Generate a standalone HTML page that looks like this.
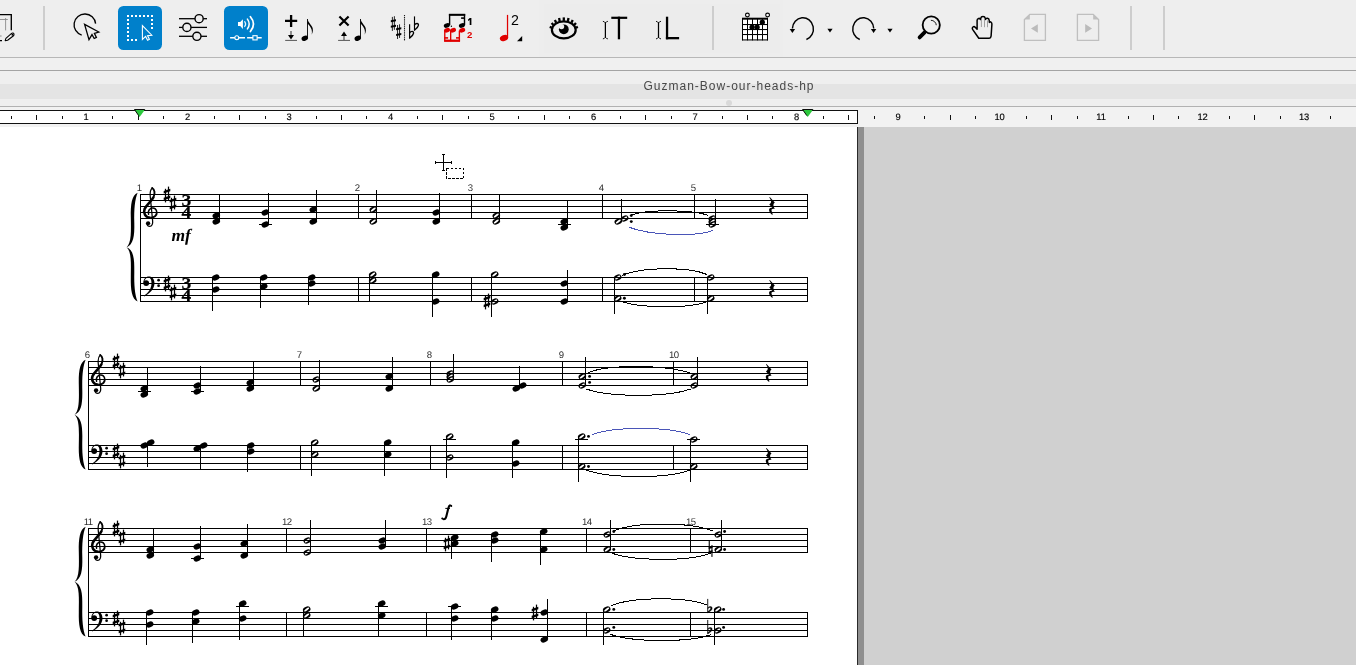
<!DOCTYPE html>
<html lang="en">
<head>
<meta charset="utf-8">
<title>Guzman-Bow-our-heads-hp</title>
<style>
html,body{margin:0;padding:0;overflow:hidden}
body{width:1356px;height:665px;overflow:hidden;position:relative;background:#efefef;font-family:"Liberation Sans",sans-serif;}
.abs{position:absolute;left:0;top:0}
#toolbar{position:absolute;left:0;top:0;width:1356px;height:57px;background:#eeeeee;border-bottom:1px solid #b7b7b7}
#strip1{position:absolute;left:0;top:58px;width:1356px;height:12px;background:#f0f0f0;border-bottom:1px solid #a4a4a4}
#titlebar{position:absolute;left:0;top:71px;width:1356px;height:35px;background:#efefef;border-bottom:1px solid #b2b2b2;overflow:hidden}
#titleband{position:absolute;left:0;top:13px;width:1356px;height:15px;background:#e4e4e4}
#title{position:absolute;left:0;top:7px;width:1458px;text-align:center;font-size:12px;line-height:16px;color:#484848;letter-spacing:1.0px;white-space:nowrap}
#dot{position:absolute;left:726px;top:29px;width:6px;height:6px;border-radius:3px;background:#d9d9d9}
#rulerbar{position:absolute;left:0;top:107px;width:1356px;height:20px;background:#f2f2f2}
#rulerbox{position:absolute;left:-2px;top:3px;width:858px;height:12px;background:#fff;border:1px solid #111}
#desk{position:absolute;left:0;top:127px;width:1356px;height:538px;background:#d0d0d0}
#shadow{position:absolute;left:857px;top:0;width:7px;height:538px;background:#8f8f8f}
#page{position:absolute;left:0;top:0;width:857px;height:538px;background:#fff;border-right:1px solid #2a2a2a}
.rn{font-family:"Liberation Sans",sans-serif;font-size:9.4px;fill:#000;stroke:#000;stroke-width:0.15px;text-rendering:geometricPrecision}
.mn{font-family:"Liberation Sans",sans-serif;font-size:9.6px;fill:#303030;text-rendering:geometricPrecision}
.ts{font-family:"Liberation Serif",serif;font-weight:bold;font-size:17.5px;fill:#000;stroke:#000;stroke-width:0.15px}
.dyn{font-family:"Liberation Serif",serif;font-weight:bold;font-style:italic;fill:#000;text-rendering:geometricPrecision}
svg{position:absolute;left:0;top:0;overflow:hidden;will-change:transform}
#title{will-change:transform}
</style>
</head>
<body>
<div id="toolbar">
<svg width="1356" height="57" viewBox="0 0 1356 57">
<rect x="539" y="0" width="244" height="57" fill="#ededed"/>
<rect x="544" y="4.8" width="236" height="47.5" fill="#ececec"/>
<rect x="43" y="6" width="2" height="44" fill="#cdcdcd"/>
<rect x="712" y="6" width="2" height="44" fill="#cdcdcd"/>
<rect x="1130" y="6" width="2" height="44" fill="#cdcdcd"/>
<rect x="1163" y="6" width="2" height="44" fill="#cdcdcd"/>
<path d="M0 14.55 L11.3 14.55 L11.3 30.3" fill="none" stroke="#000" stroke-width="1.35"/>
<path d="M0 19.5 L7.8 19.5 M5.6 18 L5.6 30.4" fill="none" stroke="#8a8a8a" stroke-width="0.9"/>
<path d="M0 40.6 L2 40.6" stroke="#000" stroke-width="1.2"/>
<path d="M0 36 L1.6 36" stroke="#8a8a8a" stroke-width="1"/>
<path d="M5.2 40.7 L5.9 38.3 L11.3 33.6 C12.3 32.7 13.9 32.9 14.0 34.2 C14.1 35.0 13.6 35.6 13.2 36.0 L7.6 40.3 Z" fill="#f4f4f4" stroke="#000" stroke-width="1.1" stroke-linejoin="round"/>
<circle cx="12.4" cy="34.7" r="0.95" fill="#000"/>
<path d="M81.7 35.1 A10.8 10.8 0 1 1 95.6 23.6" fill="none" stroke="#000" stroke-width="1.35"/>
<path d="M84.6 24.4 L98.8 32.0 L94.4 33.4 L96.4 37.4 L94.2 38.5 L92.0 34.6 L89.0 39.6 Z" fill="#eeeeee" stroke="#000" stroke-width="1.3" stroke-linejoin="miter"/>
<rect x="118" y="6" width="44" height="44" rx="5.5" fill="#0080cb"/>
<rect x="127" y="15" width="2" height="2" fill="#fff"/>
<rect x="127" y="15" width="2" height="2" fill="#fff"/>
<rect x="131" y="15" width="2" height="2" fill="#fff"/>
<rect x="127" y="19" width="2" height="2" fill="#fff"/>
<rect x="135" y="15" width="2" height="2" fill="#fff"/>
<rect x="127" y="23" width="2" height="2" fill="#fff"/>
<rect x="139" y="15" width="2" height="2" fill="#fff"/>
<rect x="127" y="27" width="2" height="2" fill="#fff"/>
<rect x="143" y="15" width="2" height="2" fill="#fff"/>
<rect x="127" y="31" width="2" height="2" fill="#fff"/>
<rect x="147" y="15" width="2" height="2" fill="#fff"/>
<rect x="127" y="35" width="2" height="2" fill="#fff"/>
<rect x="151" y="15" width="2" height="2" fill="#fff"/>
<rect x="127" y="39" width="2" height="2" fill="#fff"/>
<rect x="151" y="15" width="2" height="2" fill="#fff"/>
<rect x="151" y="19" width="2" height="2" fill="#fff"/>
<rect x="151" y="23" width="2" height="2" fill="#fff"/>
<rect x="151" y="27" width="2" height="2" fill="#fff"/>
<rect x="127" y="39" width="2" height="2" fill="#fff"/>
<rect x="131" y="39" width="2" height="2" fill="#fff"/>
<rect x="135" y="39" width="2" height="2" fill="#fff"/>
<path d="M142.4 25.6 L142.4 39.4 L145.6 36.4 L147.6 40.2 L149.4 39.3 L147.5 35.6 L151.8 35.2 Z" fill="#0080cb" stroke="#fff" stroke-width="1.1" stroke-linejoin="miter"/>
<path d="M179 18.7 L207 18.7" stroke="#000" stroke-width="1.3"/>
<circle cx="199.1" cy="18.7" r="4.1" fill="#eeeeee" stroke="#000" stroke-width="1.4"/>
<path d="M179 27.4 L207 27.4" stroke="#000" stroke-width="1.3"/>
<circle cx="186.9" cy="27.4" r="4.1" fill="#eeeeee" stroke="#000" stroke-width="1.4"/>
<path d="M179 36.3 L207 36.3" stroke="#000" stroke-width="1.3"/>
<circle cx="196.9" cy="36.3" r="4.1" fill="#eeeeee" stroke="#000" stroke-width="1.4"/>
<rect x="224" y="6" width="44" height="44" rx="5.5" fill="#0080cb"/>
<path d="M238 22 L240.2 22 L242.9 19.2 L242.9 29 L240.2 25.9 L238 25.9 Z" fill="#fff"/>
<path d="M244.7 21.6 Q246.6 24.0 244.7 26.5" fill="none" stroke="#fff" stroke-width="1.2" opacity="0.92" stroke-linecap="round"/>
<path d="M247.4 19.1 Q251.0 24.0 247.4 28.9" fill="none" stroke="#fff" stroke-width="1.5" stroke-linecap="round"/>
<path d="M250.4 16.7 Q256.6 24.0 250.4 31.5" fill="none" stroke="#fff" stroke-width="1.75" stroke-linecap="round"/>
<path d="M230.1 37.7 L245 37.7 M247.1 37.7 L261.7 37.7" stroke="#fff" stroke-width="1.5"/>
<circle cx="236.8" cy="37.7" r="1.95" fill="#0080cb" stroke="#fff" stroke-width="1.1"/>
<rect x="252.9" y="35.7" width="4.2" height="4.2" fill="#0080cb" stroke="#fff" stroke-width="1.1"/>
<path d="M285 20.9 L297.2 20.9 M291.1 15.1 L291.1 27" stroke="#000" stroke-width="2.3"/>
<path d="M291.0 31 L291.0 35.4" stroke="#6e6e6e" stroke-width="1.5"/>
<path d="M288.0 35.0 L294.0 35.0 L291.0 39.5 Z" fill="#000"/>
<path d="M285.2 40.4 L297 40.4" stroke="#555" stroke-width="1"/>
<ellipse cx="304.8" cy="38.35" rx="3.35" ry="2.45" transform="rotate(-24 304.8 38.35)" fill="#000"/>
<rect x="307.05" y="19" width="0.9" height="19" fill="#000"/>
<path d="M307.5 18.8 C308 23.4 313.2 25.4 312.9 30.4 C312.8 32 312.3 33.4 311.6 34.8 C312.6 31.4 311.7 27.2 307.5 23.4 Z" fill="#000"/>
<path d="M339.4 16.5 L348.6 25.5 M348.6 16.5 L339.4 25.5" stroke="#000" stroke-width="2.2"/>
<path d="M344 35.6 L344 40.0" stroke="#6e6e6e" stroke-width="1.5"/>
<path d="M341.0 36.0 L347.0 36.0 L344 31.5 Z" fill="#000"/>
<path d="M338.1 40.4 L350 40.4" stroke="#555" stroke-width="1"/>
<ellipse cx="357.8" cy="38.35" rx="3.35" ry="2.45" transform="rotate(-24 357.8 38.35)" fill="#000"/>
<rect x="360.05" y="19" width="0.9" height="19" fill="#000"/>
<path d="M360.5 18.8 C361 23.4 366.2 25.4 365.9 30.4 C365.8 32 365.3 33.4 364.6 34.8 C365.6 31.4 364.7 27.2 360.5 23.4 Z" fill="#000"/>
<g fill="#000"><rect x="391.88" y="16.9" width="0.85" height="14.0"/><rect x="393.88" y="16.2" width="0.85" height="13.6"/><path d="M390.8 20.2 l5.2 -1.0 l0 2.0 l-5.2 1.0 Z"/><path d="M390.8 25.8 l5.2 -1.0 l0 2.0 l-5.2 1.0 Z"/></g>
<g fill="#000"><rect x="397.18" y="25" width="0.85" height="14.0"/><rect x="399.18" y="24.3" width="0.85" height="13.6"/><path d="M396.1 28.3 l5.2 -1.0 l0 2.0 l-5.2 1.0 Z"/><path d="M396.1 33.9 l5.2 -1.0 l0 2.0 l-5.2 1.0 Z"/></g>
<path d="M404.5 15 L404.5 41" stroke="#c4c4c4" stroke-width="1"/>
<path d="M404.5 15.1 L404.5 41" stroke="#1a1a1a" stroke-width="1.1" stroke-dasharray="1 0.84"/>
<path d="M409.6 24.3 L409.6 38.3" stroke="#000" stroke-width="1.15" fill="none"/>
<path d="M409.6 32.9 C410.8 30.9 413.9 30.7 413.5 33.3 C413.1 35.5 411 36.9 409.6 38" fill="none" stroke="#000" stroke-width="1.35" stroke-linecap="round"/>
<path d="M414.5 16.4 L414.5 30.4" stroke="#000" stroke-width="1.15" fill="none"/>
<path d="M414.5 25 C415.7 23 418.8 22.8 418.4 25.4 C418 27.6 415.9 29 414.5 30.1" fill="none" stroke="#000" stroke-width="1.35" stroke-linecap="round"/>
<rect x="448.9" y="13.8" width="16.3" height="2.05" fill="#000"/>
<rect x="448.9" y="14" width="1.4" height="11.2" fill="#000"/>
<rect x="463.8" y="14" width="1.4" height="11.2" fill="#000"/>
<rect x="461.1" y="17.3" width="3.5" height="1.6" fill="#000"/>
<ellipse cx="446.8" cy="25.5" rx="3.1" ry="2.15" transform="rotate(-20 446.8 25.5)" fill="#000"/>
<ellipse cx="461.9" cy="25.5" rx="3.1" ry="2.15" transform="rotate(-20 461.9 25.5)" fill="#000"/>
<circle cx="451.4" cy="26.3" r="0.7" fill="#000"/>
<path d="M469.7 18.1 L471.4 18.1 L471.4 24.9 L469.7 24.9 L469.7 20.0 L468.2 20.9 L467.9 19.7 Z" fill="#000"/>
<ellipse cx="447" cy="30.3" rx="3.1" ry="2.2" transform="rotate(-20 447 30.3)" fill="#e00000"/>
<ellipse cx="453" cy="30.3" rx="3.1" ry="2.2" transform="rotate(-20 453 30.3)" fill="#e00000"/>
<ellipse cx="462.2" cy="30.3" rx="3.1" ry="2.2" transform="rotate(-20 462.2 30.3)" fill="#e00000"/>
<rect x="444.1" y="30.6" width="1.35" height="10.6" fill="#e00000"/>
<rect x="450" y="30.6" width="1.35" height="10.6" fill="#e00000"/>
<rect x="458.7" y="30.6" width="1.35" height="10.6" fill="#e00000"/>
<rect x="444.1" y="39.6" width="15.95" height="2.3" fill="#e00000"/>
<rect x="444.1" y="37.1" width="4" height="1.6" fill="#e00000"/>
<rect x="456" y="37.1" width="4" height="1.6" fill="#e00000"/>
<text x="469.7" y="38.2" text-anchor="middle" font-family="Liberation Sans, sans-serif" font-weight="bold" font-size="9.6" fill="#e00000">2</text>
<ellipse cx="504.0" cy="38.0" rx="4.3" ry="2.95" transform="rotate(-22 504 38)" fill="#e00000"/>
<rect x="506.9" y="14.9" width="1.25" height="22.6" fill="#e00000"/>
<text x="515" y="24.85" text-anchor="middle" font-family="Liberation Sans, sans-serif" font-size="14.2" fill="#000">2</text>
<path d="M522.2 36.1 L522.2 41.2 L517 41.2 Z" fill="#000"/>
<ellipse cx="563.8" cy="29.9" rx="11.9" ry="8.5" fill="#ececec" stroke="#000" stroke-width="2.2"/>
<path d="M551.77 27.72 L549.73 26.88" stroke="#000" stroke-width="2.3"/>
<path d="M553.4 25 L551.64 23.09" stroke="#000" stroke-width="2.3"/>
<path d="M556.17 22.81 L554.87 20.05" stroke="#000" stroke-width="2.3"/>
<path d="M559.76 21.39 L559.08 18.08" stroke="#000" stroke-width="2.3"/>
<path d="M563.8 20.9 L563.8 17.4" stroke="#000" stroke-width="2.3"/>
<path d="M567.84 21.39 L568.52 18.08" stroke="#000" stroke-width="2.3"/>
<path d="M571.43 22.81 L572.73 20.05" stroke="#000" stroke-width="2.3"/>
<path d="M574.2 25 L575.96 23.09" stroke="#000" stroke-width="2.3"/>
<path d="M575.83 27.72 L577.87 26.88" stroke="#000" stroke-width="2.3"/>
<circle cx="563.8" cy="29.3" r="4.9" fill="#000"/>
<circle cx="561.5" cy="26.6" r="2.7" fill="#ececec"/>
<path d="M605.4 22.4 L605.4 37.8" stroke="#000" stroke-width="1.25"/>
<path d="M602.9 21.3 Q604.5 21.5 605.4 22.9 Q606.3 21.5 607.9 21.3 M602.9 38.9 Q604.5 38.7 605.4 37.3 Q606.3 38.7 607.9 38.9" fill="none" stroke="#000" stroke-width="0.9"/>
<rect x="611.3" y="16.7" width="15.9" height="2.2" fill="#000"/>
<rect x="617.8" y="16.7" width="2.3" height="22.6" fill="#000"/>
<path d="M658.5 22.4 L658.5 37.8" stroke="#000" stroke-width="1.25"/>
<path d="M656 21.3 Q657.6 21.5 658.5 22.9 Q659.4 21.5 661 21.3 M656 38.9 Q657.6 38.7 658.5 37.3 Q659.4 38.7 661 38.9" fill="none" stroke="#000" stroke-width="0.9"/>
<rect x="665.9" y="16.7" width="2.3" height="22.6" fill="#000"/>
<rect x="665.9" y="37" width="13.2" height="2.3" fill="#000"/>
<rect x="742" y="18" width="26" height="22.4" fill="#fff"/>
<rect x="742" y="17.7" width="26" height="2" fill="#000"/>
<rect x="742" y="18" width="1" height="22.4" fill="#000"/>
<rect x="747" y="18" width="1" height="22.4" fill="#000"/>
<rect x="752" y="18" width="1" height="22.4" fill="#000"/>
<rect x="757" y="18" width="1" height="22.4" fill="#000"/>
<rect x="762" y="18" width="1" height="22.4" fill="#000"/>
<rect x="767" y="18" width="1" height="22.4" fill="#000"/>
<rect x="742" y="24" width="26" height="1.05" fill="#000"/>
<rect x="742" y="29" width="26" height="1.05" fill="#000"/>
<rect x="742" y="34" width="26" height="1.05" fill="#000"/>
<rect x="742" y="39.4" width="26" height="1.05" fill="#000"/>
<circle cx="747.4" cy="15.0" r="1.9" fill="#f6f6f6" stroke="#000" stroke-width="1.1"/>
<circle cx="767.6" cy="15.0" r="1.9" fill="#f6f6f6" stroke="#000" stroke-width="1.1"/>
<ellipse cx="762.3" cy="22.2" rx="2.6" ry="2.7" fill="#000"/>
<ellipse cx="752.1" cy="27.2" rx="2.6" ry="2.7" fill="#000"/>
<ellipse cx="757.1" cy="27.2" rx="2.6" ry="2.7" fill="#000"/>
<path d="M792.4 28.6 A10.5 11.2 0 1 1 806.4 39.5" fill="none" stroke="#000" stroke-width="1.45"/>
<path d="M789.7 28.9 L795.1 28.9 L792.4 33.0 Z" fill="#000"/>
<path d="M827.4 28.7 L832.6 28.7 L830 32.6 Z" fill="#000"/>
<path d="M859.75 39.5 A10.5 11.2 0 1 1 873.75 28.6" fill="none" stroke="#000" stroke-width="1.45"/>
<path d="M870.9 28.9 L876.3 28.9 L873.6 33.0 Z" fill="#000"/>
<path d="M887.4 28.7 L892.6 28.7 L890 32.6 Z" fill="#000"/>
<circle cx="931.25" cy="25.0" r="8.6" fill="none" stroke="#000" stroke-width="1.85"/>
<path d="M930.9 20.3 A5.4 5.4 0 0 1 936.3 25.2" fill="none" stroke="#000" stroke-width="0.9"/>
<path d="M924.6 32.3 L919.6 37.4" stroke="#000" stroke-width="3.8" stroke-linecap="round"/>
<path d="M978.8 38.3 L989.0 38.3 C990.4 38.3 990.9 37.2 991.1 36 L991.9 24.2 C992.0 22.2 990.2 21.2 989.4 22.4 L989.2 20.2 C989 17.8 986 17.6 985.4 19.4 L985.2 18.2 C984.8 15.8 981.2 15.8 980.8 18.2 L980.6 19.6 C979.8 17.6 977.2 18.2 977.1 20.4 L977.1 29.2 L975.2 27.2 C973.8 25.8 971.4 27.4 972.6 29.4 Z" fill="#eeeeee" stroke="#000" stroke-width="1.5" stroke-linejoin="round"/>
<path d="M981.4 19.4 L981.4 27 M984.5 18.6 L984.5 27.2 M987.5 20.4 L987.5 27.2" stroke="#8c8c8c" stroke-width="0.8"/>
<path d="M1029.8 14.4 L1045.4 14.4 L1045.4 40.4 L1024.4 40.4 L1024.4 19.6 Z" fill="none" stroke="#bfbfbf" stroke-width="1.3"/>
<path d="M1024.4 19.6 L1029.8 14.4 L1029.8 19.6 Z" fill="#bfbfbf"/>
<path d="M1031 28.4 L1037.8 24.2 L1037.8 32.8 Z" fill="#bbbbbb"/>
<path d="M1077.4 14.4 L1093.2 14.4 L1098.6 19.6 L1098.6 40.4 L1077.4 40.4 Z" fill="none" stroke="#bfbfbf" stroke-width="1.3"/>
<path d="M1093.2 14.4 L1098.6 19.6 L1093.2 19.6 Z" fill="#bfbfbf"/>
<path d="M1092 28.4 L1085.2 24.0 L1085.2 32.8 Z" fill="#bbbbbb"/>
</svg>
</div>
<div id="strip1"></div>
<div id="titlebar"><div id="titleband"></div><div id="title">Guzman-Bow-our-heads-hp</div><div id="dot"></div></div>
<div id="rulerbar"><div id="rulerbox"></div></div>
<div id="desk"><div id="shadow"></div><div id="page"></div></div>
<svg id="ruler" width="1356" height="665" viewBox="0 0 1356 665">
<text x="-15.38" y="119.75" text-anchor="middle" class="rn">0</text>
<rect x="11" y="116" width="1" height="3" fill="#111"/>
<rect x="36" y="115" width="1" height="5" fill="#111"/>
<rect x="62" y="116" width="1" height="3" fill="#111"/>
<text x="86.12" y="119.75" text-anchor="middle" class="rn">1</text>
<rect x="112" y="116" width="1" height="3" fill="#111"/>
<rect x="138" y="115" width="1" height="5" fill="#111"/>
<rect x="163" y="116" width="1" height="3" fill="#111"/>
<text x="187.62" y="119.75" text-anchor="middle" class="rn">2</text>
<rect x="214" y="116" width="1" height="3" fill="#111"/>
<rect x="239" y="115" width="1" height="5" fill="#111"/>
<rect x="265" y="116" width="1" height="3" fill="#111"/>
<text x="289.12" y="119.75" text-anchor="middle" class="rn">3</text>
<rect x="316" y="116" width="1" height="3" fill="#111"/>
<rect x="341" y="115" width="1" height="5" fill="#111"/>
<rect x="366" y="116" width="1" height="3" fill="#111"/>
<text x="390.62" y="119.75" text-anchor="middle" class="rn">4</text>
<rect x="417" y="116" width="1" height="3" fill="#111"/>
<rect x="442" y="115" width="1" height="5" fill="#111"/>
<rect x="468" y="116" width="1" height="3" fill="#111"/>
<text x="492.12" y="119.75" text-anchor="middle" class="rn">5</text>
<rect x="518" y="116" width="1" height="3" fill="#111"/>
<rect x="544" y="115" width="1" height="5" fill="#111"/>
<rect x="569" y="116" width="1" height="3" fill="#111"/>
<text x="593.62" y="119.75" text-anchor="middle" class="rn">6</text>
<rect x="620" y="116" width="1" height="3" fill="#111"/>
<rect x="645" y="115" width="1" height="5" fill="#111"/>
<rect x="671" y="116" width="1" height="3" fill="#111"/>
<text x="695.12" y="119.75" text-anchor="middle" class="rn">7</text>
<rect x="722" y="116" width="1" height="3" fill="#111"/>
<rect x="747" y="115" width="1" height="5" fill="#111"/>
<rect x="772" y="116" width="1" height="3" fill="#111"/>
<text x="796.62" y="119.75" text-anchor="middle" class="rn">8</text>
<rect x="823" y="116" width="1" height="3" fill="#111"/>
<rect x="848" y="115" width="1" height="5" fill="#111"/>
<rect x="874" y="116" width="1" height="3" fill="#111"/>
<text x="898.12" y="119.75" text-anchor="middle" class="rn">9</text>
<rect x="924" y="116" width="1" height="3" fill="#111"/>
<rect x="950" y="115" width="1" height="5" fill="#111"/>
<rect x="975" y="116" width="1" height="3" fill="#111"/>
<text x="999.62" y="119.75" text-anchor="middle" class="rn">10</text>
<rect x="1026" y="116" width="1" height="3" fill="#111"/>
<rect x="1051" y="115" width="1" height="5" fill="#111"/>
<rect x="1077" y="116" width="1" height="3" fill="#111"/>
<text x="1101.12" y="119.75" text-anchor="middle" class="rn">11</text>
<rect x="1128" y="116" width="1" height="3" fill="#111"/>
<rect x="1153" y="115" width="1" height="5" fill="#111"/>
<rect x="1178" y="116" width="1" height="3" fill="#111"/>
<text x="1202.62" y="119.75" text-anchor="middle" class="rn">12</text>
<rect x="1229" y="116" width="1" height="3" fill="#111"/>
<rect x="1254" y="115" width="1" height="5" fill="#111"/>
<rect x="1280" y="116" width="1" height="3" fill="#111"/>
<text x="1304.12" y="119.75" text-anchor="middle" class="rn">13</text>
<rect x="1330" y="116" width="1" height="3" fill="#111"/>
<rect x="1356" y="115" width="1" height="5" fill="#111"/>
<path d="M134.2 109.4 L145.1 109.4 L139.6 117.1 Z" fill="#2bc83c"/>
<path d="M144.9 111.0 L144.7 109.5 L134.5 109.5 L138.7 115.6" stroke="#0a0a0a" stroke-width="1" fill="none" stroke-linejoin="round"/>
<path d="M802.3 109.4 L813.2 109.4 L807.7 117.1 Z" fill="#2bc83c"/>
<path d="M813 111.0 L812.8 109.5 L802.6 109.5 L806.8 115.6" stroke="#0a0a0a" stroke-width="1" fill="none" stroke-linejoin="round"/>
</svg>
<svg id="score" width="1356" height="665" viewBox="0 0 1356 665">
<rect x="140" y="194" width="1" height="108" fill="#000" shape-rendering="crispEdges"/>
<rect x="807" y="194" width="1" height="25" fill="#000" shape-rendering="crispEdges"/>
<rect x="807" y="277" width="1" height="25" fill="#000" shape-rendering="crispEdges"/>
<path d="M137.6 192.8 C131.8 194.98 130.5 204.77 130.8 217.28 C131 230.88 131.6 242.85 126.6 247.2 C133.4 244.48 134.6 236.32 134.3 222.72 C134 209.12 134.8 199.87 137.6 192.8 Z M137.6 301.6 C131.8 299.42 130.5 289.63 130.8 277.12 C131 263.52 131.6 251.55 126.6 247.2 C133.4 249.92 134.6 258.08 134.3 271.68 C134 285.28 134.8 294.53 137.6 301.6 Z" fill="#000"/>
<path d="M152.3 187.9C150.6 189.6 149.9 192.8 150.2 196L152.6 220.5C153.1 224.1 151.7 226.4 149.8 226.4C148.4 226.4 147.2 225.4 147 224" fill="none" stroke="#000" stroke-width="1.25" stroke-linecap="round" stroke-linejoin="round"/>
<path d="M152.2 188C154.6 189.3 155.3 193.5 153.6 197" fill="none" stroke="#000" stroke-width="1.9" stroke-linecap="round" stroke-linejoin="round"/>
<path d="M153.6 197C151.8 201 146.5 204.5 144.6 209C143 213 145.5 217.6 150.3 217.7" fill="none" stroke="#000" stroke-width="2.6" stroke-linecap="butt" stroke-linejoin="round"/>
<path d="M150.1 217.7C154.2 217.8 157 215.4 156.8 212.2" fill="none" stroke="#000" stroke-width="1.9" stroke-linecap="butt" stroke-linejoin="round"/>
<path d="M156.8 212.4C156.6 209.2 154.4 207.8 152.4 208C149.6 208.3 147.6 211 148.6 214.2" fill="none" stroke="#000" stroke-width="1.5" stroke-linecap="round" stroke-linejoin="round"/>
<circle cx="148.1" cy="223.3" r="2.15" fill="#000"/>
<path d="M143.6 283.1C143 279.1 146 276.6 148.8 276.6C152.2 276.6 154.5 279.3 154.5 283.3C154.5 289.1 149.6 293.5 144.2 296.4L143.9 295.8C148.6 292.9 151.5 288.5 151.5 283.1C151.5 279.7 150.4 277.5 148.4 277.5C146.2 277.5 144.6 279.3 144.4 281.9Z" fill="#000"/>
<circle cx="146.2" cy="283.1" r="2.9" fill="#000"/>
<circle cx="158.6" cy="280.2" r="1.35" fill="#000"/>
<circle cx="158.6" cy="285.7" r="1.35" fill="#000"/>
<g fill="#000"><rect x="164.88" y="188.8" width="1.25" height="13.6"/><rect x="167.88" y="186.6" width="1.25" height="13.8"/><path transform="translate(167 194.5)" d="M-3.3 -3.4 L3.3 -5.7 L3.3 -3.2 L-3.3 -0.9 Z M-3.3 3.2 L3.3 0.9 L3.3 3.4 L-3.3 5.7 Z"/></g>
<g fill="#000"><rect x="170.88" y="197.8" width="1.25" height="13.6"/><rect x="173.88" y="195.6" width="1.25" height="13.8"/><path transform="translate(173 203.5)" d="M-3.3 -3.4 L3.3 -5.7 L3.3 -3.2 L-3.3 -0.9 Z M-3.3 3.2 L3.3 0.9 L3.3 3.4 L-3.3 5.7 Z"/></g>
<g fill="#000"><rect x="164.88" y="277.8" width="1.25" height="13.6"/><rect x="167.88" y="275.6" width="1.25" height="13.8"/><path transform="translate(167 283.5)" d="M-3.3 -3.4 L3.3 -5.7 L3.3 -3.2 L-3.3 -0.9 Z M-3.3 3.2 L3.3 0.9 L3.3 3.4 L-3.3 5.7 Z"/></g>
<g fill="#000"><rect x="170.88" y="286.8" width="1.25" height="13.6"/><rect x="173.88" y="284.6" width="1.25" height="13.8"/><path transform="translate(173 292.5)" d="M-3.3 -3.4 L3.3 -5.7 L3.3 -3.2 L-3.3 -0.9 Z M-3.3 3.2 L3.3 0.9 L3.3 3.4 L-3.3 5.7 Z"/></g>
<text transform="translate(186.3 206.4) scale(1.12 1)" text-anchor="middle" class="ts">3</text>
<text transform="translate(186.3 218.4) scale(1.12 1)" text-anchor="middle" class="ts">4</text>
<text transform="translate(186.3 289.4) scale(1.12 1)" text-anchor="middle" class="ts">3</text>
<text transform="translate(186.3 301.4) scale(1.12 1)" text-anchor="middle" class="ts">4</text>
<text x="139.5" y="191.1" text-anchor="middle" class="mn">1</text>
<rect x="358" y="194" width="1" height="25" fill="#000" shape-rendering="crispEdges"/>
<rect x="358" y="277" width="1" height="25" fill="#000" shape-rendering="crispEdges"/>
<text x="357.5" y="191.1" text-anchor="middle" class="mn">2</text>
<rect x="471" y="194" width="1" height="25" fill="#000" shape-rendering="crispEdges"/>
<rect x="471" y="277" width="1" height="25" fill="#000" shape-rendering="crispEdges"/>
<text x="470.5" y="191.1" text-anchor="middle" class="mn">3</text>
<rect x="602" y="194" width="1" height="25" fill="#000" shape-rendering="crispEdges"/>
<rect x="602" y="277" width="1" height="25" fill="#000" shape-rendering="crispEdges"/>
<text x="601.5" y="191.1" text-anchor="middle" class="mn">4</text>
<rect x="694" y="194" width="1" height="25" fill="#000" shape-rendering="crispEdges"/>
<rect x="694" y="277" width="1" height="25" fill="#000" shape-rendering="crispEdges"/>
<text x="693.5" y="191.1" text-anchor="middle" class="mn">5</text>
<text x="171.5" y="240.7" class="dyn" font-size="17.5">mf</text>
<rect x="219" y="194" width="1" height="27" fill="#000" shape-rendering="crispEdges"/>
<ellipse cx="216.3" cy="215.5" rx="3.95" ry="2.85" transform="rotate(-24 216.3 215.5)" fill="#000"/>
<ellipse cx="216.3" cy="221.5" rx="3.95" ry="2.85" transform="rotate(-24 216.3 221.5)" fill="#000"/>
<rect x="268" y="193" width="1" height="31" fill="#000" shape-rendering="crispEdges"/>
<ellipse cx="265.3" cy="212.5" rx="3.95" ry="2.85" transform="rotate(-24 265.3 212.5)" fill="#000"/>
<ellipse cx="265.3" cy="224.5" rx="3.95" ry="2.85" transform="rotate(-24 265.3 224.5)" fill="#000"/>
<rect x="316" y="190" width="1" height="31" fill="#000" shape-rendering="crispEdges"/>
<ellipse cx="313.3" cy="209.5" rx="3.95" ry="2.85" transform="rotate(-24 313.3 209.5)" fill="#000"/>
<ellipse cx="313.3" cy="221.5" rx="3.95" ry="2.85" transform="rotate(-24 313.3 221.5)" fill="#000"/>
<rect x="376" y="190" width="1" height="31" fill="#000" shape-rendering="crispEdges"/>
<ellipse cx="373.3" cy="209.5" rx="3.95" ry="2.85" transform="rotate(-24 373.3 209.5)" fill="#000"/>
<ellipse cx="373.3" cy="209.5" rx="3.0" ry="1.05" transform="rotate(-36 373.3 209.5)" fill="#fff"/>
<ellipse cx="373.3" cy="221.5" rx="3.95" ry="2.85" transform="rotate(-24 373.3 221.5)" fill="#000"/>
<ellipse cx="373.3" cy="221.5" rx="3.0" ry="1.05" transform="rotate(-36 373.3 221.5)" fill="#fff"/>
<rect x="439" y="193" width="1" height="28" fill="#000" shape-rendering="crispEdges"/>
<ellipse cx="436.3" cy="212.5" rx="3.95" ry="2.85" transform="rotate(-24 436.3 212.5)" fill="#000"/>
<ellipse cx="436.3" cy="221.5" rx="3.95" ry="2.85" transform="rotate(-24 436.3 221.5)" fill="#000"/>
<rect x="499" y="194" width="1" height="27" fill="#000" shape-rendering="crispEdges"/>
<ellipse cx="496.3" cy="215.5" rx="3.95" ry="2.85" transform="rotate(-24 496.3 215.5)" fill="#000"/>
<ellipse cx="496.3" cy="215.5" rx="3.0" ry="1.05" transform="rotate(-36 496.3 215.5)" fill="#fff"/>
<ellipse cx="496.3" cy="221.5" rx="3.95" ry="2.85" transform="rotate(-24 496.3 221.5)" fill="#000"/>
<ellipse cx="496.3" cy="221.5" rx="3.0" ry="1.05" transform="rotate(-36 496.3 221.5)" fill="#fff"/>
<rect x="567" y="200" width="1" height="27" fill="#000" shape-rendering="crispEdges"/>
<ellipse cx="564.3" cy="221.5" rx="3.95" ry="2.85" transform="rotate(-24 564.3 221.5)" fill="#000"/>
<ellipse cx="564.3" cy="227.5" rx="3.95" ry="2.85" transform="rotate(-24 564.3 227.5)" fill="#000"/>
<rect x="621" y="199" width="1" height="22" fill="#000" shape-rendering="crispEdges"/>
<ellipse cx="618.3" cy="221.5" rx="3.95" ry="2.85" transform="rotate(-24 618.3 221.5)" fill="#000"/>
<ellipse cx="618.3" cy="221.5" rx="3.0" ry="1.05" transform="rotate(-36 618.3 221.5)" fill="#fff"/>
<ellipse cx="624.7" cy="218.5" rx="3.95" ry="2.85" transform="rotate(-24 624.7 218.5)" fill="#000"/>
<ellipse cx="624.7" cy="218.5" rx="3.0" ry="1.05" transform="rotate(-36 624.7 218.5)" fill="#fff"/>
<circle cx="631.3" cy="215.6" r="1.45" fill="#000"/>
<circle cx="631.3" cy="221.6" r="1.45" fill="#000"/>
<rect x="715" y="199" width="1" height="25" fill="#000" shape-rendering="crispEdges"/>
<ellipse cx="712.3" cy="218.5" rx="3.95" ry="2.85" transform="rotate(-24 712.3 218.5)" fill="#000"/>
<ellipse cx="712.3" cy="218.5" rx="3.0" ry="1.05" transform="rotate(-36 712.3 218.5)" fill="#fff"/>
<ellipse cx="712.3" cy="221.5" rx="3.95" ry="2.85" transform="rotate(-24 712.3 221.5)" fill="#000"/>
<ellipse cx="712.3" cy="221.5" rx="3.0" ry="1.05" transform="rotate(-36 712.3 221.5)" fill="#fff"/>
<ellipse cx="712.3" cy="224.5" rx="3.95" ry="2.85" transform="rotate(-24 712.3 224.5)" fill="#000"/>
<ellipse cx="712.3" cy="224.5" rx="3.0" ry="1.05" transform="rotate(-36 712.3 224.5)" fill="#fff"/>
<path transform="translate(771.9 194)" fill="#000" d="M-2.1 3.0 L2.9 8.5 C1.3 9.9 0.9 11.3 3.0 14.9 C0.6 14.5 -1.0 15.3 -0.2 17.2 L0.9 20.4 L0.2 20.8 C-3.5 17.8 -4.2 13.0 0.4 13.7 L-2.6 10.4 C-0.5 9.0 0.1 7.2 -2.6 3.5 Z"/>
<path d="M631.6 214.9 C648.5 209.17 691.5 209.57 708.4 215.3" fill="none" stroke="#000" stroke-width="1" shape-rendering="crispEdges"/>
<path d="M629 227.2 C647.52 234.67 694.68 237.77 713.2 230.3" fill="none" stroke="#4a55b8" stroke-width="1" shape-rendering="crispEdges"/>
<rect x="212" y="278" width="1" height="33" fill="#000" shape-rendering="crispEdges"/>
<ellipse cx="215.7" cy="277.5" rx="3.95" ry="2.85" transform="rotate(-24 215.7 277.5)" fill="#000"/>
<ellipse cx="215.7" cy="289.5" rx="3.95" ry="2.85" transform="rotate(-24 215.7 289.5)" fill="#000"/>
<rect x="260" y="278" width="1" height="30" fill="#000" shape-rendering="crispEdges"/>
<ellipse cx="263.7" cy="277.5" rx="3.95" ry="2.85" transform="rotate(-24 263.7 277.5)" fill="#000"/>
<ellipse cx="263.7" cy="286.5" rx="3.95" ry="2.85" transform="rotate(-24 263.7 286.5)" fill="#000"/>
<rect x="308" y="278" width="1" height="27" fill="#000" shape-rendering="crispEdges"/>
<ellipse cx="311.7" cy="277.5" rx="3.95" ry="2.85" transform="rotate(-24 311.7 277.5)" fill="#000"/>
<ellipse cx="311.7" cy="283.5" rx="3.95" ry="2.85" transform="rotate(-24 311.7 283.5)" fill="#000"/>
<rect x="369" y="275" width="1" height="27" fill="#000" shape-rendering="crispEdges"/>
<ellipse cx="372.7" cy="274.5" rx="3.95" ry="2.85" transform="rotate(-24 372.7 274.5)" fill="#000"/>
<ellipse cx="372.7" cy="274.5" rx="3.0" ry="1.05" transform="rotate(-36 372.7 274.5)" fill="#fff"/>
<ellipse cx="372.7" cy="280.5" rx="3.95" ry="2.85" transform="rotate(-24 372.7 280.5)" fill="#000"/>
<ellipse cx="372.7" cy="280.5" rx="3.0" ry="1.05" transform="rotate(-36 372.7 280.5)" fill="#fff"/>
<rect x="432" y="275" width="1" height="42" fill="#000" shape-rendering="crispEdges"/>
<ellipse cx="435.7" cy="274.5" rx="3.95" ry="2.85" transform="rotate(-24 435.7 274.5)" fill="#000"/>
<ellipse cx="435.7" cy="301.5" rx="3.95" ry="2.85" transform="rotate(-24 435.7 301.5)" fill="#000"/>
<rect x="491" y="275" width="1" height="42" fill="#000" shape-rendering="crispEdges"/>
<ellipse cx="494.7" cy="274.5" rx="3.95" ry="2.85" transform="rotate(-24 494.7 274.5)" fill="#000"/>
<ellipse cx="494.7" cy="274.5" rx="3.0" ry="1.05" transform="rotate(-36 494.7 274.5)" fill="#fff"/>
<ellipse cx="494.7" cy="301.5" rx="3.95" ry="2.85" transform="rotate(-24 494.7 301.5)" fill="#000"/>
<ellipse cx="494.7" cy="301.5" rx="3.0" ry="1.05" transform="rotate(-36 494.7 301.5)" fill="#fff"/>
<g fill="#000"><rect x="484.88" y="295.8" width="1.25" height="13.6"/><rect x="487.88" y="293.6" width="1.25" height="13.8"/><path transform="translate(487 301.5)" d="M-3.3 -3.4 L3.3 -5.7 L3.3 -3.2 L-3.3 -0.9 Z M-3.3 3.2 L3.3 0.9 L3.3 3.4 L-3.3 5.7 Z"/></g>
<rect x="567" y="270" width="1" height="31" fill="#000" shape-rendering="crispEdges"/>
<ellipse cx="564.3" cy="283.5" rx="3.95" ry="2.85" transform="rotate(-24 564.3 283.5)" fill="#000"/>
<ellipse cx="564.3" cy="301.5" rx="3.95" ry="2.85" transform="rotate(-24 564.3 301.5)" fill="#000"/>
<rect x="614" y="278" width="1" height="36" fill="#000" shape-rendering="crispEdges"/>
<ellipse cx="617.7" cy="277.5" rx="3.95" ry="2.85" transform="rotate(-24 617.7 277.5)" fill="#000"/>
<ellipse cx="617.7" cy="277.5" rx="3.0" ry="1.05" transform="rotate(-36 617.7 277.5)" fill="#fff"/>
<ellipse cx="617.7" cy="298.5" rx="3.95" ry="2.85" transform="rotate(-24 617.7 298.5)" fill="#000"/>
<ellipse cx="617.7" cy="298.5" rx="3.0" ry="1.05" transform="rotate(-36 617.7 298.5)" fill="#fff"/>
<circle cx="624.4" cy="274.5" r="1.45" fill="#000"/>
<circle cx="624.4" cy="298.3" r="1.45" fill="#000"/>
<rect x="707" y="278" width="1" height="36" fill="#000" shape-rendering="crispEdges"/>
<ellipse cx="710.7" cy="277.5" rx="3.95" ry="2.85" transform="rotate(-24 710.7 277.5)" fill="#000"/>
<ellipse cx="710.7" cy="277.5" rx="3.0" ry="1.05" transform="rotate(-36 710.7 277.5)" fill="#fff"/>
<ellipse cx="710.7" cy="298.5" rx="3.95" ry="2.85" transform="rotate(-24 710.7 298.5)" fill="#000"/>
<ellipse cx="710.7" cy="298.5" rx="3.0" ry="1.05" transform="rotate(-36 710.7 298.5)" fill="#fff"/>
<path transform="translate(771.9 277)" fill="#000" d="M-2.1 3.0 L2.9 8.5 C1.3 9.9 0.9 11.3 3.0 14.9 C0.6 14.5 -1.0 15.3 -0.2 17.2 L0.9 20.4 L0.2 20.8 C-3.5 17.8 -4.2 13.0 0.4 13.7 L-2.6 10.4 C-0.5 9.0 0.1 7.2 -2.6 3.5 Z"/>
<path d="M621.6 275.5 C640.34 267.23 688.06 266.23 706.8 274.5" fill="none" stroke="#000" stroke-width="1" shape-rendering="crispEdges"/>
<path d="M621.6 301.4 C640.34 308.2 688.06 308.6 706.8 301.8" fill="none" stroke="#000" stroke-width="1" shape-rendering="crispEdges"/>
<rect x="88" y="361" width="1" height="109" fill="#000" shape-rendering="crispEdges"/>
<rect x="807" y="361" width="1" height="25" fill="#000" shape-rendering="crispEdges"/>
<rect x="807" y="445" width="1" height="25" fill="#000" shape-rendering="crispEdges"/>
<path d="M85.6 359.8 C79.8 362 78.5 371.88 78.8 384.5 C79 398.23 79.6 410.31 74.6 414.7 C81.4 411.96 82.6 403.72 82.3 390 C82 376.27 82.8 366.94 85.6 359.8 Z M85.6 469.6 C79.8 467.4 78.5 457.52 78.8 444.9 C79 431.17 79.6 419.09 74.6 414.7 C81.4 417.45 82.6 425.68 82.3 439.41 C82 453.13 82.8 462.46 85.6 469.6 Z" fill="#000"/>
<path d="M100.3 354.9C98.6 356.6 97.9 359.8 98.2 363L100.6 387.5C101.1 391.1 99.7 393.4 97.8 393.4C96.4 393.4 95.2 392.4 95 391" fill="none" stroke="#000" stroke-width="1.25" stroke-linecap="round" stroke-linejoin="round"/>
<path d="M100.2 355C102.6 356.3 103.3 360.5 101.6 364" fill="none" stroke="#000" stroke-width="1.9" stroke-linecap="round" stroke-linejoin="round"/>
<path d="M101.6 364C99.8 368 94.5 371.5 92.6 376C91 380 93.5 384.6 98.3 384.7" fill="none" stroke="#000" stroke-width="2.6" stroke-linecap="butt" stroke-linejoin="round"/>
<path d="M98.1 384.7C102.2 384.8 105 382.4 104.8 379.2" fill="none" stroke="#000" stroke-width="1.9" stroke-linecap="butt" stroke-linejoin="round"/>
<path d="M104.8 379.4C104.6 376.2 102.4 374.8 100.4 375C97.6 375.3 95.6 378 96.6 381.2" fill="none" stroke="#000" stroke-width="1.5" stroke-linecap="round" stroke-linejoin="round"/>
<circle cx="96.1" cy="390.3" r="2.15" fill="#000"/>
<path d="M91.6 451.1C91 447.1 94 444.6 96.8 444.6C100.2 444.6 102.5 447.3 102.5 451.3C102.5 457.1 97.6 461.5 92.2 464.4L91.9 463.8C96.6 460.9 99.5 456.5 99.5 451.1C99.5 447.7 98.4 445.5 96.4 445.5C94.2 445.5 92.6 447.3 92.4 449.9Z" fill="#000"/>
<circle cx="94.2" cy="451.1" r="2.9" fill="#000"/>
<circle cx="106.6" cy="448.2" r="1.35" fill="#000"/>
<circle cx="106.6" cy="453.7" r="1.35" fill="#000"/>
<g fill="#000"><rect x="113.88" y="355.8" width="1.25" height="13.6"/><rect x="116.88" y="353.6" width="1.25" height="13.8"/><path transform="translate(116 361.5)" d="M-3.3 -3.4 L3.3 -5.7 L3.3 -3.2 L-3.3 -0.9 Z M-3.3 3.2 L3.3 0.9 L3.3 3.4 L-3.3 5.7 Z"/></g>
<g fill="#000"><rect x="119.88" y="364.8" width="1.25" height="13.6"/><rect x="122.88" y="362.6" width="1.25" height="13.8"/><path transform="translate(122 370.5)" d="M-3.3 -3.4 L3.3 -5.7 L3.3 -3.2 L-3.3 -0.9 Z M-3.3 3.2 L3.3 0.9 L3.3 3.4 L-3.3 5.7 Z"/></g>
<g fill="#000"><rect x="113.88" y="445.8" width="1.25" height="13.6"/><rect x="116.88" y="443.6" width="1.25" height="13.8"/><path transform="translate(116 451.5)" d="M-3.3 -3.4 L3.3 -5.7 L3.3 -3.2 L-3.3 -0.9 Z M-3.3 3.2 L3.3 0.9 L3.3 3.4 L-3.3 5.7 Z"/></g>
<g fill="#000"><rect x="119.88" y="454.8" width="1.25" height="13.6"/><rect x="122.88" y="452.6" width="1.25" height="13.8"/><path transform="translate(122 460.5)" d="M-3.3 -3.4 L3.3 -5.7 L3.3 -3.2 L-3.3 -0.9 Z M-3.3 3.2 L3.3 0.9 L3.3 3.4 L-3.3 5.7 Z"/></g>
<text x="87.4" y="358.1" text-anchor="middle" class="mn">6</text>
<rect x="300" y="361" width="1" height="25" fill="#000" shape-rendering="crispEdges"/>
<rect x="300" y="445" width="1" height="25" fill="#000" shape-rendering="crispEdges"/>
<text x="299.5" y="358.1" text-anchor="middle" class="mn">7</text>
<rect x="430" y="361" width="1" height="25" fill="#000" shape-rendering="crispEdges"/>
<rect x="430" y="445" width="1" height="25" fill="#000" shape-rendering="crispEdges"/>
<text x="429.5" y="358.1" text-anchor="middle" class="mn">8</text>
<rect x="562" y="361" width="1" height="25" fill="#000" shape-rendering="crispEdges"/>
<rect x="562" y="445" width="1" height="25" fill="#000" shape-rendering="crispEdges"/>
<text x="561.5" y="358.1" text-anchor="middle" class="mn">9</text>
<rect x="673" y="361" width="1" height="25" fill="#000" shape-rendering="crispEdges"/>
<rect x="673" y="445" width="1" height="25" fill="#000" shape-rendering="crispEdges"/>
<text x="673.8" y="358.1" text-anchor="middle" class="mn" letter-spacing="-0.6">10</text>
<rect x="147" y="368" width="1" height="26" fill="#000" shape-rendering="crispEdges"/>
<ellipse cx="144.3" cy="388.5" rx="3.95" ry="2.85" transform="rotate(-24 144.3 388.5)" fill="#000"/>
<ellipse cx="144.3" cy="394.5" rx="3.95" ry="2.85" transform="rotate(-24 144.3 394.5)" fill="#000"/>
<rect x="200" y="366" width="1" height="25" fill="#000" shape-rendering="crispEdges"/>
<ellipse cx="197.3" cy="385.5" rx="3.95" ry="2.85" transform="rotate(-24 197.3 385.5)" fill="#000"/>
<ellipse cx="197.3" cy="391.5" rx="3.95" ry="2.85" transform="rotate(-24 197.3 391.5)" fill="#000"/>
<rect x="253" y="361" width="1" height="27" fill="#000" shape-rendering="crispEdges"/>
<ellipse cx="250.3" cy="382.5" rx="3.95" ry="2.85" transform="rotate(-24 250.3 382.5)" fill="#000"/>
<ellipse cx="250.3" cy="388.5" rx="3.95" ry="2.85" transform="rotate(-24 250.3 388.5)" fill="#000"/>
<rect x="319" y="360" width="1" height="28" fill="#000" shape-rendering="crispEdges"/>
<ellipse cx="316.3" cy="379.5" rx="3.95" ry="2.85" transform="rotate(-24 316.3 379.5)" fill="#000"/>
<ellipse cx="316.3" cy="379.5" rx="3.0" ry="1.05" transform="rotate(-36 316.3 379.5)" fill="#fff"/>
<ellipse cx="316.3" cy="388.5" rx="3.95" ry="2.85" transform="rotate(-24 316.3 388.5)" fill="#000"/>
<ellipse cx="316.3" cy="388.5" rx="3.0" ry="1.05" transform="rotate(-36 316.3 388.5)" fill="#fff"/>
<rect x="392" y="357" width="1" height="31" fill="#000" shape-rendering="crispEdges"/>
<ellipse cx="389.3" cy="376.5" rx="3.95" ry="2.85" transform="rotate(-24 389.3 376.5)" fill="#000"/>
<ellipse cx="389.3" cy="388.5" rx="3.95" ry="2.85" transform="rotate(-24 389.3 388.5)" fill="#000"/>
<rect x="453" y="354" width="1" height="25" fill="#000" shape-rendering="crispEdges"/>
<ellipse cx="450.3" cy="373.5" rx="3.95" ry="2.85" transform="rotate(-24 450.3 373.5)" fill="#000"/>
<ellipse cx="450.3" cy="373.5" rx="3.0" ry="1.05" transform="rotate(-36 450.3 373.5)" fill="#fff"/>
<ellipse cx="450.3" cy="376.5" rx="3.95" ry="2.85" transform="rotate(-24 450.3 376.5)" fill="#000"/>
<ellipse cx="450.3" cy="376.5" rx="3.0" ry="1.05" transform="rotate(-36 450.3 376.5)" fill="#fff"/>
<ellipse cx="450.3" cy="379.5" rx="3.95" ry="2.85" transform="rotate(-24 450.3 379.5)" fill="#000"/>
<ellipse cx="450.3" cy="379.5" rx="3.0" ry="1.05" transform="rotate(-36 450.3 379.5)" fill="#fff"/>
<rect x="519" y="366" width="1" height="22" fill="#000" shape-rendering="crispEdges"/>
<ellipse cx="516.3" cy="388.5" rx="3.95" ry="2.85" transform="rotate(-24 516.3 388.5)" fill="#000"/>
<ellipse cx="522.7" cy="385.5" rx="3.95" ry="2.85" transform="rotate(-24 522.7 385.5)" fill="#000"/>
<rect x="585" y="357" width="1" height="28" fill="#000" shape-rendering="crispEdges"/>
<ellipse cx="582.3" cy="376.5" rx="3.95" ry="2.85" transform="rotate(-24 582.3 376.5)" fill="#000"/>
<ellipse cx="582.3" cy="376.5" rx="3.0" ry="1.05" transform="rotate(-36 582.3 376.5)" fill="#fff"/>
<ellipse cx="582.3" cy="385.5" rx="3.95" ry="2.85" transform="rotate(-24 582.3 385.5)" fill="#000"/>
<ellipse cx="582.3" cy="385.5" rx="3.0" ry="1.05" transform="rotate(-36 582.3 385.5)" fill="#fff"/>
<circle cx="589.6" cy="376.4" r="1.45" fill="#000"/>
<circle cx="589.6" cy="382.4" r="1.45" fill="#000"/>
<rect x="697" y="357" width="1" height="28" fill="#000" shape-rendering="crispEdges"/>
<ellipse cx="694.3" cy="376.5" rx="3.95" ry="2.85" transform="rotate(-24 694.3 376.5)" fill="#000"/>
<ellipse cx="694.3" cy="376.5" rx="3.0" ry="1.05" transform="rotate(-36 694.3 376.5)" fill="#fff"/>
<ellipse cx="694.3" cy="385.5" rx="3.95" ry="2.85" transform="rotate(-24 694.3 385.5)" fill="#000"/>
<ellipse cx="694.3" cy="385.5" rx="3.0" ry="1.05" transform="rotate(-36 694.3 385.5)" fill="#fff"/>
<path transform="translate(768.6 361)" fill="#000" d="M-2.1 3.0 L2.9 8.5 C1.3 9.9 0.9 11.3 3.0 14.9 C0.6 14.5 -1.0 15.3 -0.2 17.2 L0.9 20.4 L0.2 20.8 C-3.5 17.8 -4.2 13.0 0.4 13.7 L-2.6 10.4 C-0.5 9.0 0.1 7.2 -2.6 3.5 Z"/>
<path d="M587.9 372.6 C610.71 363.8 668.79 364.9 691.6 373.7" fill="none" stroke="#000" stroke-width="1" shape-rendering="crispEdges"/>
<path d="M586.3 389 C609.22 397.4 667.58 397.4 690.5 389" fill="none" stroke="#000" stroke-width="1" shape-rendering="crispEdges"/>
<rect x="147" y="443" width="1" height="24" fill="#000" shape-rendering="crispEdges"/>
<ellipse cx="150.7" cy="442.5" rx="3.95" ry="2.85" transform="rotate(-24 150.7 442.5)" fill="#000"/>
<ellipse cx="144.3" cy="445.5" rx="3.95" ry="2.85" transform="rotate(-24 144.3 445.5)" fill="#000"/>
<rect x="200" y="446" width="1" height="24" fill="#000" shape-rendering="crispEdges"/>
<ellipse cx="203.7" cy="445.5" rx="3.95" ry="2.85" transform="rotate(-24 203.7 445.5)" fill="#000"/>
<ellipse cx="197.3" cy="448.5" rx="3.95" ry="2.85" transform="rotate(-24 197.3 448.5)" fill="#000"/>
<rect x="247" y="446" width="1" height="26" fill="#000" shape-rendering="crispEdges"/>
<ellipse cx="250.7" cy="445.5" rx="3.95" ry="2.85" transform="rotate(-24 250.7 445.5)" fill="#000"/>
<ellipse cx="250.7" cy="451.5" rx="3.95" ry="2.85" transform="rotate(-24 250.7 451.5)" fill="#000"/>
<rect x="311" y="443" width="1" height="33" fill="#000" shape-rendering="crispEdges"/>
<ellipse cx="314.7" cy="442.5" rx="3.95" ry="2.85" transform="rotate(-24 314.7 442.5)" fill="#000"/>
<ellipse cx="314.7" cy="442.5" rx="3.0" ry="1.05" transform="rotate(-36 314.7 442.5)" fill="#fff"/>
<ellipse cx="314.7" cy="454.5" rx="3.95" ry="2.85" transform="rotate(-24 314.7 454.5)" fill="#000"/>
<ellipse cx="314.7" cy="454.5" rx="3.0" ry="1.05" transform="rotate(-36 314.7 454.5)" fill="#fff"/>
<rect x="384" y="443" width="1" height="33" fill="#000" shape-rendering="crispEdges"/>
<ellipse cx="387.7" cy="442.5" rx="3.95" ry="2.85" transform="rotate(-24 387.7 442.5)" fill="#000"/>
<ellipse cx="387.7" cy="454.5" rx="3.95" ry="2.85" transform="rotate(-24 387.7 454.5)" fill="#000"/>
<rect x="446" y="437" width="1" height="41" fill="#000" shape-rendering="crispEdges"/>
<ellipse cx="449.7" cy="436.5" rx="3.95" ry="2.85" transform="rotate(-24 449.7 436.5)" fill="#000"/>
<ellipse cx="449.7" cy="436.5" rx="3.0" ry="1.05" transform="rotate(-36 449.7 436.5)" fill="#fff"/>
<ellipse cx="449.7" cy="457.5" rx="3.95" ry="2.85" transform="rotate(-24 449.7 457.5)" fill="#000"/>
<ellipse cx="449.7" cy="457.5" rx="3.0" ry="1.05" transform="rotate(-36 449.7 457.5)" fill="#fff"/>
<rect x="512" y="443" width="1" height="35" fill="#000" shape-rendering="crispEdges"/>
<ellipse cx="515.7" cy="442.5" rx="3.95" ry="2.85" transform="rotate(-24 515.7 442.5)" fill="#000"/>
<ellipse cx="515.7" cy="463.5" rx="3.95" ry="2.85" transform="rotate(-24 515.7 463.5)" fill="#000"/>
<rect x="578" y="437" width="1" height="45" fill="#000" shape-rendering="crispEdges"/>
<ellipse cx="581.7" cy="436.5" rx="3.95" ry="2.85" transform="rotate(-24 581.7 436.5)" fill="#000"/>
<ellipse cx="581.7" cy="436.5" rx="3.0" ry="1.05" transform="rotate(-36 581.7 436.5)" fill="#fff"/>
<ellipse cx="581.7" cy="466.5" rx="3.95" ry="2.85" transform="rotate(-24 581.7 466.5)" fill="#000"/>
<ellipse cx="581.7" cy="466.5" rx="3.0" ry="1.05" transform="rotate(-36 581.7 466.5)" fill="#fff"/>
<circle cx="588.5" cy="436.4" r="1.45" fill="#000"/>
<circle cx="588.5" cy="466.5" r="1.45" fill="#000"/>
<rect x="690" y="440" width="1" height="42" fill="#000" shape-rendering="crispEdges"/>
<ellipse cx="693.7" cy="439.5" rx="3.95" ry="2.85" transform="rotate(-24 693.7 439.5)" fill="#000"/>
<ellipse cx="693.7" cy="439.5" rx="3.0" ry="1.05" transform="rotate(-36 693.7 439.5)" fill="#fff"/>
<ellipse cx="693.7" cy="466.5" rx="3.95" ry="2.85" transform="rotate(-24 693.7 466.5)" fill="#000"/>
<ellipse cx="693.7" cy="466.5" rx="3.0" ry="1.05" transform="rotate(-36 693.7 466.5)" fill="#fff"/>
<path transform="translate(768.6 445)" fill="#000" d="M-2.1 3.0 L2.9 8.5 C1.3 9.9 0.9 11.3 3.0 14.9 C0.6 14.5 -1.0 15.3 -0.2 17.2 L0.9 20.4 L0.2 20.8 C-3.5 17.8 -4.2 13.0 0.4 13.7 L-2.6 10.4 C-0.5 9.0 0.1 7.2 -2.6 3.5 Z"/>
<path d="M592.1 434.8 C613.64 426.27 668.46 426.27 690 434.8" fill="none" stroke="#4a55b8" stroke-width="1" shape-rendering="crispEdges"/>
<path d="M586.3 470 C609 478.53 666.8 478.83 689.5 470.3" fill="none" stroke="#000" stroke-width="1" shape-rendering="crispEdges"/>
<rect x="88" y="528" width="1" height="109" fill="#000" shape-rendering="crispEdges"/>
<rect x="807" y="528" width="1" height="25" fill="#000" shape-rendering="crispEdges"/>
<rect x="807" y="612" width="1" height="25" fill="#000" shape-rendering="crispEdges"/>
<path d="M85.6 526.8 C79.8 529 78.5 538.88 78.8 551.5 C79 565.23 79.6 577.31 74.6 581.7 C81.4 578.95 82.6 570.72 82.3 557 C82 543.27 82.8 533.94 85.6 526.8 Z M85.6 636.6 C79.8 634.4 78.5 624.52 78.8 611.89 C79 598.17 79.6 586.09 74.6 581.7 C81.4 584.44 82.6 592.68 82.3 606.4 C82 620.13 82.8 629.46 85.6 636.6 Z" fill="#000"/>
<path d="M100.3 521.9C98.6 523.6 97.9 526.8 98.2 530L100.6 554.5C101.1 558.1 99.7 560.4 97.8 560.4C96.4 560.4 95.2 559.4 95 558" fill="none" stroke="#000" stroke-width="1.25" stroke-linecap="round" stroke-linejoin="round"/>
<path d="M100.2 522C102.6 523.3 103.3 527.5 101.6 531" fill="none" stroke="#000" stroke-width="1.9" stroke-linecap="round" stroke-linejoin="round"/>
<path d="M101.6 531C99.8 535 94.5 538.5 92.6 543C91 547 93.5 551.6 98.3 551.7" fill="none" stroke="#000" stroke-width="2.6" stroke-linecap="butt" stroke-linejoin="round"/>
<path d="M98.1 551.7C102.2 551.8 105 549.4 104.8 546.2" fill="none" stroke="#000" stroke-width="1.9" stroke-linecap="butt" stroke-linejoin="round"/>
<path d="M104.8 546.4C104.6 543.2 102.4 541.8 100.4 542C97.6 542.3 95.6 545 96.6 548.2" fill="none" stroke="#000" stroke-width="1.5" stroke-linecap="round" stroke-linejoin="round"/>
<circle cx="96.1" cy="557.3" r="2.15" fill="#000"/>
<path d="M91.6 618.1C91 614.1 94 611.6 96.8 611.6C100.2 611.6 102.5 614.3 102.5 618.3C102.5 624.1 97.6 628.5 92.2 631.4L91.9 630.8C96.6 627.9 99.5 623.5 99.5 618.1C99.5 614.7 98.4 612.5 96.4 612.5C94.2 612.5 92.6 614.3 92.4 616.9Z" fill="#000"/>
<circle cx="94.2" cy="618.1" r="2.9" fill="#000"/>
<circle cx="106.6" cy="615.2" r="1.35" fill="#000"/>
<circle cx="106.6" cy="620.7" r="1.35" fill="#000"/>
<g fill="#000"><rect x="113.88" y="522.8" width="1.25" height="13.6"/><rect x="116.88" y="520.6" width="1.25" height="13.8"/><path transform="translate(116 528.5)" d="M-3.3 -3.4 L3.3 -5.7 L3.3 -3.2 L-3.3 -0.9 Z M-3.3 3.2 L3.3 0.9 L3.3 3.4 L-3.3 5.7 Z"/></g>
<g fill="#000"><rect x="119.88" y="531.8" width="1.25" height="13.6"/><rect x="122.88" y="529.6" width="1.25" height="13.8"/><path transform="translate(122 537.5)" d="M-3.3 -3.4 L3.3 -5.7 L3.3 -3.2 L-3.3 -0.9 Z M-3.3 3.2 L3.3 0.9 L3.3 3.4 L-3.3 5.7 Z"/></g>
<g fill="#000"><rect x="113.88" y="612.8" width="1.25" height="13.6"/><rect x="116.88" y="610.6" width="1.25" height="13.8"/><path transform="translate(116 618.5)" d="M-3.3 -3.4 L3.3 -5.7 L3.3 -3.2 L-3.3 -0.9 Z M-3.3 3.2 L3.3 0.9 L3.3 3.4 L-3.3 5.7 Z"/></g>
<g fill="#000"><rect x="119.88" y="621.8" width="1.25" height="13.6"/><rect x="122.88" y="619.6" width="1.25" height="13.8"/><path transform="translate(122 627.5)" d="M-3.3 -3.4 L3.3 -5.7 L3.3 -3.2 L-3.3 -0.9 Z M-3.3 3.2 L3.3 0.9 L3.3 3.4 L-3.3 5.7 Z"/></g>
<text x="88.2" y="525.1" text-anchor="middle" class="mn" letter-spacing="-0.6">11</text>
<rect x="286" y="528" width="1" height="25" fill="#000" shape-rendering="crispEdges"/>
<rect x="286" y="612" width="1" height="25" fill="#000" shape-rendering="crispEdges"/>
<text x="286.8" y="525.1" text-anchor="middle" class="mn" letter-spacing="-0.6">12</text>
<rect x="426" y="528" width="1" height="25" fill="#000" shape-rendering="crispEdges"/>
<rect x="426" y="612" width="1" height="25" fill="#000" shape-rendering="crispEdges"/>
<text x="426.8" y="525.1" text-anchor="middle" class="mn" letter-spacing="-0.6">13</text>
<rect x="586" y="528" width="1" height="25" fill="#000" shape-rendering="crispEdges"/>
<rect x="586" y="612" width="1" height="25" fill="#000" shape-rendering="crispEdges"/>
<text x="586.8" y="525.1" text-anchor="middle" class="mn" letter-spacing="-0.6">14</text>
<rect x="690" y="528" width="1" height="25" fill="#000" shape-rendering="crispEdges"/>
<rect x="690" y="612" width="1" height="25" fill="#000" shape-rendering="crispEdges"/>
<text x="690.8" y="525.1" text-anchor="middle" class="mn" letter-spacing="-0.6">15</text>
<g fill="none" stroke="#000" stroke-linecap="round"><path d="M449.7 505.7 C448.5 506.6 448.4 508.0 447.9 510.0 L446.3 516.4 C445.8 518.3 445.1 519.2 443.8 519.2" stroke-width="2.1"/><path d="M449.2 505.7 C449.9 504.9 450.8 504.9 451.3 505.6" stroke-width="1.3"/><path d="M444.2 519.2 C443.2 519.4 442.5 519.0 442.2 518.5" stroke-width="1.2"/><path d="M445.3 508.4 L450.0 508.4" stroke-width="1.0" stroke-linecap="butt"/><circle cx="451.3" cy="506.0" r="0.95" fill="#000" stroke="none"/><circle cx="442.3" cy="518.4" r="0.95" fill="#000" stroke="none"/></g>
<rect x="153" y="528" width="1" height="27" fill="#000" shape-rendering="crispEdges"/>
<ellipse cx="150.3" cy="549.5" rx="3.95" ry="2.85" transform="rotate(-24 150.3 549.5)" fill="#000"/>
<ellipse cx="150.3" cy="555.5" rx="3.95" ry="2.85" transform="rotate(-24 150.3 555.5)" fill="#000"/>
<rect x="200" y="526" width="1" height="32" fill="#000" shape-rendering="crispEdges"/>
<ellipse cx="197.3" cy="546.5" rx="3.95" ry="2.85" transform="rotate(-24 197.3 546.5)" fill="#000"/>
<ellipse cx="197.3" cy="558.5" rx="3.95" ry="2.85" transform="rotate(-24 197.3 558.5)" fill="#000"/>
<rect x="247" y="524" width="1" height="31" fill="#000" shape-rendering="crispEdges"/>
<ellipse cx="244.3" cy="543.5" rx="3.95" ry="2.85" transform="rotate(-24 244.3 543.5)" fill="#000"/>
<ellipse cx="244.3" cy="555.5" rx="3.95" ry="2.85" transform="rotate(-24 244.3 555.5)" fill="#000"/>
<rect x="310" y="520" width="1" height="32" fill="#000" shape-rendering="crispEdges"/>
<ellipse cx="307.3" cy="540.5" rx="3.95" ry="2.85" transform="rotate(-24 307.3 540.5)" fill="#000"/>
<ellipse cx="307.3" cy="540.5" rx="3.0" ry="1.05" transform="rotate(-36 307.3 540.5)" fill="#fff"/>
<ellipse cx="307.3" cy="552.5" rx="3.95" ry="2.85" transform="rotate(-24 307.3 552.5)" fill="#000"/>
<ellipse cx="307.3" cy="552.5" rx="3.0" ry="1.05" transform="rotate(-36 307.3 552.5)" fill="#fff"/>
<rect x="385" y="520" width="1" height="26" fill="#000" shape-rendering="crispEdges"/>
<ellipse cx="382.3" cy="540.5" rx="3.95" ry="2.85" transform="rotate(-24 382.3 540.5)" fill="#000"/>
<ellipse cx="382.3" cy="546.5" rx="3.95" ry="2.85" transform="rotate(-24 382.3 546.5)" fill="#000"/>
<rect x="451" y="538" width="1" height="21" fill="#000" shape-rendering="crispEdges"/>
<ellipse cx="454.7" cy="537.5" rx="3.95" ry="2.85" transform="rotate(-24 454.7 537.5)" fill="#000"/>
<ellipse cx="454.7" cy="543.5" rx="3.95" ry="2.85" transform="rotate(-24 454.7 543.5)" fill="#000"/>
<g fill="#000"><rect x="444.88" y="537.8" width="1.25" height="13.6"/><rect x="447.88" y="535.6" width="1.25" height="13.8"/><path transform="translate(447 543.5)" d="M-3.3 -3.4 L3.3 -5.7 L3.3 -3.2 L-3.3 -0.9 Z M-3.3 3.2 L3.3 0.9 L3.3 3.4 L-3.3 5.7 Z"/></g>
<rect x="491" y="535" width="1" height="27" fill="#000" shape-rendering="crispEdges"/>
<ellipse cx="494.7" cy="534.5" rx="3.95" ry="2.85" transform="rotate(-24 494.7 534.5)" fill="#000"/>
<ellipse cx="494.7" cy="540.5" rx="3.95" ry="2.85" transform="rotate(-24 494.7 540.5)" fill="#000"/>
<rect x="540" y="532" width="1" height="33" fill="#000" shape-rendering="crispEdges"/>
<ellipse cx="543.7" cy="531.5" rx="3.95" ry="2.85" transform="rotate(-24 543.7 531.5)" fill="#000"/>
<ellipse cx="543.7" cy="549.5" rx="3.95" ry="2.85" transform="rotate(-24 543.7 549.5)" fill="#000"/>
<rect x="610" y="520" width="1" height="29" fill="#000" shape-rendering="crispEdges"/>
<ellipse cx="607.3" cy="534.5" rx="3.95" ry="2.85" transform="rotate(-24 607.3 534.5)" fill="#000"/>
<ellipse cx="607.3" cy="534.5" rx="3.0" ry="1.05" transform="rotate(-36 607.3 534.5)" fill="#fff"/>
<ellipse cx="607.3" cy="549.5" rx="3.95" ry="2.85" transform="rotate(-24 607.3 549.5)" fill="#000"/>
<ellipse cx="607.3" cy="549.5" rx="3.0" ry="1.05" transform="rotate(-36 607.3 549.5)" fill="#fff"/>
<circle cx="613.8" cy="531.5" r="1.45" fill="#000"/>
<circle cx="613.8" cy="549.5" r="1.45" fill="#000"/>
<rect x="721" y="520" width="1" height="29" fill="#000" shape-rendering="crispEdges"/>
<ellipse cx="718.3" cy="534.5" rx="3.95" ry="2.85" transform="rotate(-24 718.3 534.5)" fill="#000"/>
<ellipse cx="718.3" cy="534.5" rx="3.0" ry="1.05" transform="rotate(-36 718.3 534.5)" fill="#fff"/>
<ellipse cx="718.3" cy="549.5" rx="3.95" ry="2.85" transform="rotate(-24 718.3 549.5)" fill="#000"/>
<ellipse cx="718.3" cy="549.5" rx="3.0" ry="1.05" transform="rotate(-36 718.3 549.5)" fill="#fff"/>
<circle cx="724.6" cy="531.5" r="1.45" fill="#000"/>
<circle cx="724.6" cy="549.5" r="1.45" fill="#000"/>
<g transform="translate(710.6 549.5)" fill="#000"><rect x="-1.9" y="-8.8" width="1.1" height="11.6"/><rect x="0.8" y="-4.4" width="1.1" height="11.8"/><path d="M-1.9 -2.6 L1.9 -3.8 L1.9 -1.6 L-1.9 -0.4 Z"/><path d="M-1.9 1.8 L1.9 0.6 L1.9 2.8 L-1.9 4.0 Z"/></g>
<path d="M614.2 530.7 C635.98 521.5 691.42 522 713.2 531.2" fill="none" stroke="#000" stroke-width="1" shape-rendering="crispEdges"/>
<path d="M611 552.8 C632.89 561.2 688.61 561.7 710.5 553.3" fill="none" stroke="#000" stroke-width="1" shape-rendering="crispEdges"/>
<rect x="146" y="613" width="1" height="32" fill="#000" shape-rendering="crispEdges"/>
<ellipse cx="149.7" cy="612.5" rx="3.95" ry="2.85" transform="rotate(-24 149.7 612.5)" fill="#000"/>
<ellipse cx="149.7" cy="624.5" rx="3.95" ry="2.85" transform="rotate(-24 149.7 624.5)" fill="#000"/>
<rect x="192" y="613" width="1" height="30" fill="#000" shape-rendering="crispEdges"/>
<ellipse cx="195.7" cy="612.5" rx="3.95" ry="2.85" transform="rotate(-24 195.7 612.5)" fill="#000"/>
<ellipse cx="195.7" cy="621.5" rx="3.95" ry="2.85" transform="rotate(-24 195.7 621.5)" fill="#000"/>
<rect x="239" y="604" width="1" height="36" fill="#000" shape-rendering="crispEdges"/>
<ellipse cx="242.7" cy="603.5" rx="3.95" ry="2.85" transform="rotate(-24 242.7 603.5)" fill="#000"/>
<ellipse cx="242.7" cy="618.5" rx="3.95" ry="2.85" transform="rotate(-24 242.7 618.5)" fill="#000"/>
<rect x="303" y="610" width="1" height="27" fill="#000" shape-rendering="crispEdges"/>
<ellipse cx="306.7" cy="609.5" rx="3.95" ry="2.85" transform="rotate(-24 306.7 609.5)" fill="#000"/>
<ellipse cx="306.7" cy="609.5" rx="3.0" ry="1.05" transform="rotate(-36 306.7 609.5)" fill="#fff"/>
<ellipse cx="306.7" cy="615.5" rx="3.95" ry="2.85" transform="rotate(-24 306.7 615.5)" fill="#000"/>
<ellipse cx="306.7" cy="615.5" rx="3.0" ry="1.05" transform="rotate(-36 306.7 615.5)" fill="#fff"/>
<rect x="378" y="604" width="1" height="33" fill="#000" shape-rendering="crispEdges"/>
<ellipse cx="381.7" cy="603.5" rx="3.95" ry="2.85" transform="rotate(-24 381.7 603.5)" fill="#000"/>
<ellipse cx="381.7" cy="615.5" rx="3.95" ry="2.85" transform="rotate(-24 381.7 615.5)" fill="#000"/>
<rect x="451" y="607" width="1" height="33" fill="#000" shape-rendering="crispEdges"/>
<ellipse cx="454.7" cy="606.5" rx="3.95" ry="2.85" transform="rotate(-24 454.7 606.5)" fill="#000"/>
<ellipse cx="454.7" cy="618.5" rx="3.95" ry="2.85" transform="rotate(-24 454.7 618.5)" fill="#000"/>
<rect x="491" y="610" width="1" height="30" fill="#000" shape-rendering="crispEdges"/>
<ellipse cx="494.7" cy="609.5" rx="3.95" ry="2.85" transform="rotate(-24 494.7 609.5)" fill="#000"/>
<ellipse cx="494.7" cy="618.5" rx="3.95" ry="2.85" transform="rotate(-24 494.7 618.5)" fill="#000"/>
<rect x="547" y="599" width="1" height="40" fill="#000" shape-rendering="crispEdges"/>
<ellipse cx="544.3" cy="612.5" rx="3.95" ry="2.85" transform="rotate(-24 544.3 612.5)" fill="#000"/>
<ellipse cx="544.3" cy="639.5" rx="3.95" ry="2.85" transform="rotate(-24 544.3 639.5)" fill="#000"/>
<g fill="#000"><rect x="532.88" y="606.8" width="1.25" height="13.6"/><rect x="535.88" y="604.6" width="1.25" height="13.8"/><path transform="translate(535 612.5)" d="M-3.3 -3.4 L3.3 -5.7 L3.3 -3.2 L-3.3 -0.9 Z M-3.3 3.2 L3.3 0.9 L3.3 3.4 L-3.3 5.7 Z"/></g>
<rect x="603" y="610" width="1" height="35" fill="#000" shape-rendering="crispEdges"/>
<ellipse cx="606.7" cy="609.5" rx="3.95" ry="2.85" transform="rotate(-24 606.7 609.5)" fill="#000"/>
<ellipse cx="606.7" cy="609.5" rx="3.0" ry="1.05" transform="rotate(-36 606.7 609.5)" fill="#fff"/>
<ellipse cx="606.7" cy="630.5" rx="3.95" ry="2.85" transform="rotate(-24 606.7 630.5)" fill="#000"/>
<ellipse cx="606.7" cy="630.5" rx="3.0" ry="1.05" transform="rotate(-36 606.7 630.5)" fill="#fff"/>
<circle cx="613.8" cy="609.4" r="1.45" fill="#000"/>
<circle cx="613.8" cy="627.4" r="1.45" fill="#000"/>
<rect x="714" y="610" width="1" height="35" fill="#000" shape-rendering="crispEdges"/>
<ellipse cx="717.7" cy="609.5" rx="3.95" ry="2.85" transform="rotate(-24 717.7 609.5)" fill="#000"/>
<ellipse cx="717.7" cy="609.5" rx="3.0" ry="1.05" transform="rotate(-36 717.7 609.5)" fill="#fff"/>
<ellipse cx="717.7" cy="630.5" rx="3.95" ry="2.85" transform="rotate(-24 717.7 630.5)" fill="#000"/>
<ellipse cx="717.7" cy="630.5" rx="3.0" ry="1.05" transform="rotate(-36 717.7 630.5)" fill="#fff"/>
<circle cx="723.6" cy="609.4" r="1.45" fill="#000"/>
<circle cx="723.6" cy="627.4" r="1.45" fill="#000"/>
<g transform="translate(709.6 609.5)" fill="#000" stroke="#000" stroke-width="0.35"><rect x="-2.3" y="-10.6" width="0.9" height="13.8" stroke="none"/><path d="M-1.9 -1.6 C-0.4 -3.4 2.6 -3.6 2.6 -1.2 C2.6 0.8 0.2 2.2 -1.9 3.4 L-1.9 2.2 C-0.4 1.2 1.1 -0.2 1.1 -1.4 C1.1 -2.6 -0.6 -2.2 -1.6 -0.9 Z"/></g>
<g transform="translate(709.6 630.5)" fill="#000" stroke="#000" stroke-width="0.35"><rect x="-2.3" y="-10.6" width="0.9" height="13.8" stroke="none"/><path d="M-1.9 -1.6 C-0.4 -3.4 2.6 -3.6 2.6 -1.2 C2.6 0.8 0.2 2.2 -1.9 3.4 L-1.9 2.2 C-0.4 1.2 1.1 -0.2 1.1 -1.4 C1.1 -2.6 -0.6 -2.2 -1.6 -0.9 Z"/></g>
<path d="M611 605.7 C632.21 596.9 686.19 596.4 707.4 605.2" fill="none" stroke="#000" stroke-width="1" shape-rendering="crispEdges"/>
<path d="M610.5 634.4 C632.61 642.4 688.89 642.7 711 634.7" fill="none" stroke="#000" stroke-width="1" shape-rendering="crispEdges"/>
<rect x="443" y="154" width="1" height="17" fill="#000" shape-rendering="crispEdges"/>
<rect x="435" y="161" width="1" height="3" fill="#000" shape-rendering="crispEdges"/>
<rect x="451" y="161" width="1" height="3" fill="#000" shape-rendering="crispEdges"/>
<rect x="446.5" y="168.5" width="17" height="10" fill="none" stroke="#000" stroke-width="1" stroke-dasharray="2.4 1.6" shape-rendering="crispEdges"/>
<rect x="140" y="194" width="668" height="1" fill="#000" shape-rendering="crispEdges"/>
<rect x="140" y="200" width="668" height="1" fill="#000" shape-rendering="crispEdges"/>
<rect x="140" y="206" width="668" height="1" fill="#000" shape-rendering="crispEdges"/>
<rect x="140" y="212" width="668" height="1" fill="#000" shape-rendering="crispEdges"/>
<rect x="140" y="218" width="668" height="1" fill="#000" shape-rendering="crispEdges"/>
<rect x="140" y="277" width="668" height="1" fill="#000" shape-rendering="crispEdges"/>
<rect x="140" y="283" width="668" height="1" fill="#000" shape-rendering="crispEdges"/>
<rect x="140" y="289" width="668" height="1" fill="#000" shape-rendering="crispEdges"/>
<rect x="140" y="295" width="668" height="1" fill="#000" shape-rendering="crispEdges"/>
<rect x="140" y="301" width="668" height="1" fill="#000" shape-rendering="crispEdges"/>
<rect x="259" y="224" width="13" height="1" fill="#000" shape-rendering="crispEdges"/>
<rect x="558" y="224" width="13" height="1" fill="#000" shape-rendering="crispEdges"/>
<rect x="706" y="224" width="13" height="1" fill="#000" shape-rendering="crispEdges"/>
<rect x="88" y="361" width="720" height="1" fill="#000" shape-rendering="crispEdges"/>
<rect x="88" y="367" width="720" height="1" fill="#000" shape-rendering="crispEdges"/>
<rect x="88" y="373" width="720" height="1" fill="#000" shape-rendering="crispEdges"/>
<rect x="88" y="379" width="720" height="1" fill="#000" shape-rendering="crispEdges"/>
<rect x="88" y="385" width="720" height="1" fill="#000" shape-rendering="crispEdges"/>
<rect x="88" y="445" width="720" height="1" fill="#000" shape-rendering="crispEdges"/>
<rect x="88" y="451" width="720" height="1" fill="#000" shape-rendering="crispEdges"/>
<rect x="88" y="457" width="720" height="1" fill="#000" shape-rendering="crispEdges"/>
<rect x="88" y="463" width="720" height="1" fill="#000" shape-rendering="crispEdges"/>
<rect x="88" y="469" width="720" height="1" fill="#000" shape-rendering="crispEdges"/>
<rect x="138" y="391" width="13" height="1" fill="#000" shape-rendering="crispEdges"/>
<rect x="191" y="391" width="13" height="1" fill="#000" shape-rendering="crispEdges"/>
<rect x="443" y="439" width="13" height="1" fill="#000" shape-rendering="crispEdges"/>
<rect x="575" y="439" width="13" height="1" fill="#000" shape-rendering="crispEdges"/>
<rect x="687" y="439" width="13" height="1" fill="#000" shape-rendering="crispEdges"/>
<rect x="88" y="528" width="720" height="1" fill="#000" shape-rendering="crispEdges"/>
<rect x="88" y="534" width="720" height="1" fill="#000" shape-rendering="crispEdges"/>
<rect x="88" y="540" width="720" height="1" fill="#000" shape-rendering="crispEdges"/>
<rect x="88" y="546" width="720" height="1" fill="#000" shape-rendering="crispEdges"/>
<rect x="88" y="552" width="720" height="1" fill="#000" shape-rendering="crispEdges"/>
<rect x="88" y="612" width="720" height="1" fill="#000" shape-rendering="crispEdges"/>
<rect x="88" y="618" width="720" height="1" fill="#000" shape-rendering="crispEdges"/>
<rect x="88" y="624" width="720" height="1" fill="#000" shape-rendering="crispEdges"/>
<rect x="88" y="630" width="720" height="1" fill="#000" shape-rendering="crispEdges"/>
<rect x="88" y="636" width="720" height="1" fill="#000" shape-rendering="crispEdges"/>
<rect x="191" y="558" width="13" height="1" fill="#000" shape-rendering="crispEdges"/>
<rect x="236" y="606" width="13" height="1" fill="#000" shape-rendering="crispEdges"/>
<rect x="375" y="606" width="13" height="1" fill="#000" shape-rendering="crispEdges"/>
<rect x="448" y="606" width="13" height="1" fill="#000" shape-rendering="crispEdges"/>
<rect x="435" y="162" width="17" height="1" fill="#000" shape-rendering="crispEdges"/>
<rect x="442" y="154" width="3" height="1" fill="#000" shape-rendering="crispEdges"/>
<rect x="442" y="170" width="3" height="1" fill="#000" shape-rendering="crispEdges"/>
</svg>
</body>
</html>
